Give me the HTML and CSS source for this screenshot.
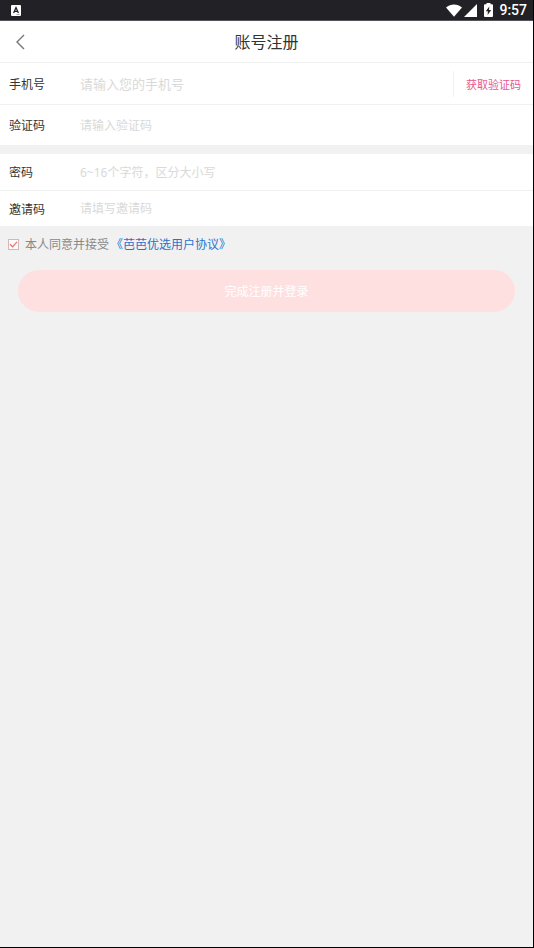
FILE: index.html
```
<!DOCTYPE html>
<html lang="zh-CN">
<head>
<meta charset="utf-8">
<meta name="viewport" content="width=device-width, initial-scale=1">
<title>账号注册</title>
<link rel="stylesheet" href="styles.css">
</head>
<body>
<div class="status">
  <svg class="status-app" width="10" height="11" viewBox="0 0 10 11" aria-hidden="true">
    <rect width="10" height="11" rx="1" fill="#fff"/>
    <path d="M2.6 8 5 2.6 7.4 8M3.4 6.3h3.2" fill="none" stroke="#222126" stroke-width="1.3"/>
    <path d="M5.5 9.5h3" stroke="#aaa" stroke-width="1"/>
  </svg>
  <div class="status-right">
    <svg width="16" height="13" viewBox="0 0 16 13" aria-hidden="true"><path d="M0 3.4C4.6-.5 11.400-.5 16 3.400L8 12.800z" fill="#fff"/></svg>
    <svg width="13" height="13" viewBox="0 0 13 13" aria-hidden="true"><path d="M13 0v13H0z" fill="#fff"/></svg>
    <svg class="battery" width="9" height="14" viewBox="0 0 9 14" aria-hidden="true"><path d="M2.500 0h4v1.300H8q1 0 1 1V13q0 1-1 1H1q-1 0-1-1V2.300q0-1 1-1h1.500z" fill="#fff"/><path d="M5.300 3.500 1.800 8.300h2.100L3.600 12l3.600-4.900H5z" fill="#222126"/></svg>
    <span class="clock">9:57</span>
  </div>
</div>
<header class="header">
  <button class="back" type="button" aria-label="返回">
    <svg width="9" height="16" viewBox="0 0 9 16" aria-hidden="true"><path d="M8 1 1 8l7 7" fill="none" stroke="#777" stroke-width="1.400"/></svg>
  </button>
  <h1 class="title">账号注册</h1>
</header>
<form class="form">
  <div class="group">
    <div class="row tall">
      <label for="phone">手机号</label>
      <input class="phone" id="phone" type="tel" placeholder="请输入您的手机号">
      <button class="get-code" type="button">获取验证码</button>
    </div>
    <div class="row tall">
      <label for="code">验证码</label>
      <input id="code" type="text" placeholder="请输入验证码">
    </div>
  </div>
  <div class="group">
    <div class="row">
      <label for="password">密码</label>
      <input id="password" type="password" placeholder="6~16个字符，区分大小写">
    </div>
    <div class="row">
      <label for="invite">邀请码</label>
      <input id="invite" type="text" placeholder="请填写邀请码">
    </div>
  </div>
  <div class="terms">
    <span class="tick">
      <input id="agree" type="checkbox" checked>
      <svg width="11" height="11" viewBox="0 0 11 11" aria-hidden="true"><path d="m2 5.300 2.600 2.500L9 2.800" fill="none" stroke="#e8706f" stroke-width="1.200"/></svg>
    </span>
    <label for="agree">本人同意并接受</label><a href="#">《芭芭优选用户协议》</a>
  </div>
  <button class="submit" type="submit">完成注册并登录</button>
</form>
</body>
</html>
```
FILE: styles.css
```
* {
  box-sizing: border-box;
}

body {
  margin: 0;
  min-height: 100vh;
  background: #f1f1f1;
  border-right: 1px solid #000;
  border-bottom: 1px solid #000;
  font-family: "Noto Sans", "Noto Sans CJK SC", sans-serif;
  font-size: 12px;
  color: #333;
}

button,
input {
  margin: 0;
  padding: 0;
  border: 0;
  background: none;
  font: inherit;
}

.status {
  display: flex;
  align-items: center;
  justify-content: space-between;
  height: 21px;
  padding: 0 7px 0 11px;
  background: #222126;
  border-bottom: 1px solid #55545a;
  margin-right: -1px;
}

.status svg {
  display: block;
}

.status-right {
  display: flex;
  align-items: center;
  gap: 2px;
}

.battery {
  margin-left: 5px;
}

.clock {
  margin-left: 4px;
  color: #fff;
  font: 500 14px/20px Roboto, sans-serif;
}

.header {
  display: grid;
  grid-template-columns: 40px 1fr 40px;
  align-items: center;
  height: 42px;
  background: #fff;
  border-bottom: 1px solid #f1f1f1;
}

.back {
  display: flex;
  align-items: center;
  height: 40px;
  padding-left: 16px;
}

.title {
  margin: 0;
  font-size: 16px;
  line-height: 24px;
  font-weight: 400;
  text-align: center;
}

.group {
  background: #fff;
}

.group + .group {
  margin-top: 9px;
}

.row {
  display: flex;
  align-items: center;
  height: 36px;
  padding-left: 9px;
}

.row + .row {
  border-top: 1px solid #f1f1f1;
}

.tall {
  height: 41px;
}

.row label {
  width: 71px;
}

.row input {
  flex: 1;
  min-width: 0;
  height: 30px;
  outline: 0;
}

.row .phone {
  font-size: 13px;
}

.row input::placeholder {
  color: #d9d9d9;
  opacity: 1;
}

.get-code {
  height: 26px;
  padding: 0 12px;
  border-left: 1px solid #f1f1f1;
  color: #e8568f;
  font-size: 11px;
}

.terms {
  display: flex;
  align-items: center;
  height: 28px;
  padding: 8px 0 0 8px;
  color: #888;
}

.tick {
  display: grid;
  margin-right: 6px;
}

.tick input,
.tick svg {
  grid-area: 1 / 1;
  pointer-events: none;
}

.tick input {
  appearance: none;
  width: 11px;
  height: 11px;
  border: 1px solid #d2b8b8;
  background: #fafafa;
  pointer-events: auto;
}

.tick input:not(:checked) + svg {
  visibility: hidden;
}

.terms a {
  margin-left: 2px;
  color: #2b72cc;
  text-decoration: none;
}

.submit {
  display: block;
  width: calc(100% - 36px);
  height: 42px;
  margin: 16px 18px 0;
  border-radius: 21px;
  background: #ffe0e1;
  color: #fff;
}
```
